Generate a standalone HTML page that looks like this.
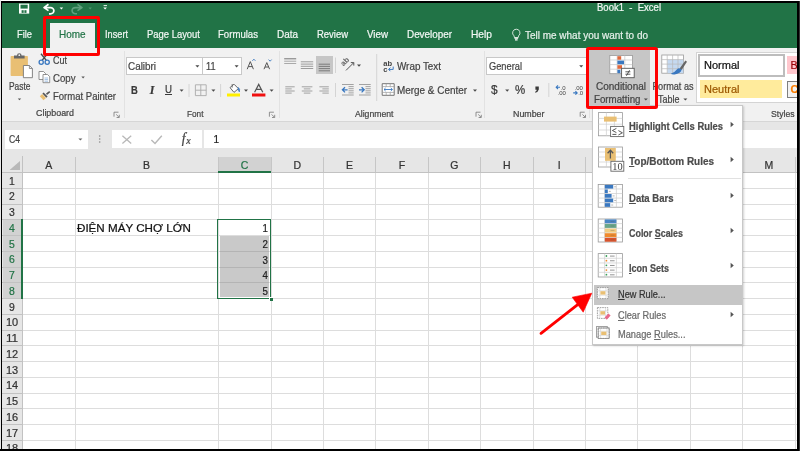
<!DOCTYPE html>
<html><head><meta charset="utf-8"><title>Book1 - Excel</title>
<style>
html,body{margin:0;padding:0}
body{width:800px;height:451px;position:relative;overflow:hidden;background:#fff;font-family:"Liberation Sans",sans-serif}
#a{will-change:transform}
#a div,#a span,#a svg{position:absolute}
.t{white-space:nowrap;line-height:1;-webkit-text-stroke:0.22px currentColor}
u{text-decoration:underline;text-underline-offset:1px;text-decoration-thickness:0.7px}
</style></head>
<body><div id="a">
<div style="left:0px;top:0px;width:800px;height:451px;background:#fff;"></div>
<div style="left:0px;top:0px;width:800px;height:47.5px;background:#217346;"></div>
<div style="left:0px;top:47.5px;width:800px;height:73.5px;background:#f1f1f1;"></div>
<div style="left:0px;top:121px;width:800px;height:1px;background:#d6d6d6;"></div>
<div style="left:0px;top:122px;width:800px;height:50.5px;background:#e6e6e6;"></div>
<div style="left:50.4px;top:23px;width:44.8px;height:25px;background:#f1f1f1;"></div>
<span class="t" style="top:2.03px;font-size:10.6px;color:#f2f7f4;left:597px;transform-origin:0 0;transform:scaleX(0.8982);">Book1 &nbsp;- &nbsp;Excel</span>
<span class="t" style="top:29.46px;font-size:10.8px;color:#f2f7f4;left:17px;transform-origin:0 0;transform:scaleX(0.8618);">File</span>
<span class="t" style="top:29.46px;font-size:10.8px;color:#f2f7f4;left:105px;transform-origin:0 0;transform:scaleX(0.8514);">Insert</span>
<span class="t" style="top:29.46px;font-size:10.8px;color:#f2f7f4;left:147px;transform-origin:0 0;transform:scaleX(0.8740);">Page Layout</span>
<span class="t" style="top:29.46px;font-size:10.8px;color:#f2f7f4;left:218px;transform-origin:0 0;transform:scaleX(0.8889);">Formulas</span>
<span class="t" style="top:29.46px;font-size:10.8px;color:#f2f7f4;left:277px;transform-origin:0 0;transform:scaleX(0.9205);">Data</span>
<span class="t" style="top:29.46px;font-size:10.8px;color:#f2f7f4;left:317px;transform-origin:0 0;transform:scaleX(0.8756);">Review</span>
<span class="t" style="top:29.46px;font-size:10.8px;color:#f2f7f4;left:367px;transform-origin:0 0;transform:scaleX(0.9044);">View</span>
<span class="t" style="top:29.46px;font-size:10.8px;color:#f2f7f4;left:407px;transform-origin:0 0;transform:scaleX(0.9143);">Developer</span>
<span class="t" style="top:29.46px;font-size:10.8px;color:#f2f7f4;left:471px;transform-origin:0 0;transform:scaleX(0.9451);">Help</span>
<span class="t" style="top:29.46px;font-size:10.8px;color:#217346;left:59.4px;transform-origin:0 0;transform:scaleX(0.9232);">Home</span>
<span class="t" style="top:29.56px;font-size:10.8px;color:#e6f0ea;left:525px;transform-origin:0 0;transform:scaleX(0.9232);">Tell me what you want to do</span>
<div style="left:123.5px;top:51px;width:1px;height:67px;background:#e2e2e2;"></div>
<div style="left:278.5px;top:51px;width:1px;height:67px;background:#e2e2e2;"></div>
<div style="left:483.5px;top:51px;width:1px;height:67px;background:#e2e2e2;"></div>
<div style="left:588.5px;top:51px;width:1px;height:67px;background:#e2e2e2;"></div>
<span class="t" style="top:80.71px;font-size:10.5px;color:#444;left:9px;transform-origin:0 0;transform:scaleX(0.8005);">Paste</span>
<span class="t" style="top:54.61px;font-size:10.5px;color:#444;left:53px;transform-origin:0 0;transform:scaleX(0.8566);">Cut</span>
<span class="t" style="top:72.61px;font-size:10.5px;color:#444;left:53px;transform-origin:0 0;transform:scaleX(0.9178);">Copy</span>
<span class="t" style="top:90.71px;font-size:10.5px;color:#444;left:53px;transform-origin:0 0;transform:scaleX(0.9071);">Format Painter</span>
<span class="t" style="top:109.43px;font-size:9.3px;color:#444;left:36.2px;transform-origin:0 0;transform:scaleX(0.9548);">Clipboard</span>
<span class="t" style="top:109.51px;font-size:9.2px;color:#444;left:187px;transform-origin:0 0;transform:scaleX(0.8972);">Font</span>
<span class="t" style="top:109.51px;font-size:9.2px;color:#444;left:355px;transform-origin:0 0;transform:scaleX(0.9423);">Alignment</span>
<span class="t" style="top:109.51px;font-size:9.2px;color:#444;left:513px;transform-origin:0 0;transform:scaleX(0.9637);">Number</span>
<span class="t" style="top:109.51px;font-size:9.2px;color:#444;left:771px;transform-origin:0 0;transform:scaleX(0.9388);">Styles</span>
<div style="left:126px;top:56.5px;width:76.5px;height:18px;background:#fff;box-sizing:border-box;border:1px solid #c8c8c8;"></div>
<div style="left:201.5px;top:56.5px;width:40px;height:18px;background:#fff;box-sizing:border-box;border:1px solid #c8c8c8;"></div>
<span class="t" style="top:60.71px;font-size:10.5px;color:#444;left:128.2px;transform-origin:0 0;transform:scaleX(0.9407);">Calibri</span>
<span class="t" style="top:60.71px;font-size:10.5px;color:#444;left:205.5px;transform-origin:0 0;transform:scaleX(0.8711);">11</span>
<span class="t" style="top:84.56px;font-size:10.8px;color:#3a3a3a;font-weight:bold;left:131px;transform-origin:0 0;transform:scaleX(0.8704);">B</span>
<span class="t" style="top:83.54px;font-size:12px;color:#3a3a3a;font-weight:bold;font-style:italic;left:149.8px;transform-origin:0 0;font-family:&quot;Liberation Serif&quot;,serif;">I</span>
<span class="t" style="top:84.60px;font-size:10.4px;color:#3a3a3a;left:165px;transform-origin:0 0;transform:scaleX(0.9314);text-decoration:underline;text-underline-offset:1px;">U</span>
<div style="left:316px;top:55.5px;width:17px;height:18px;background:#c6c6c6;"></div>
<span class="t" style="top:61.11px;font-size:10.5px;color:#444;left:397px;transform-origin:0 0;transform:scaleX(0.9384);">Wrap Text</span>
<span class="t" style="top:85.11px;font-size:10.5px;color:#444;left:397.2px;transform-origin:0 0;transform:scaleX(0.9444);">Merge &amp; Center</span>
<div style="left:486px;top:56.5px;width:101.5px;height:18px;background:#fff;box-sizing:border-box;border:1px solid #c8c8c8;"></div>
<span class="t" style="top:60.71px;font-size:10.5px;color:#444;left:488.5px;transform-origin:0 0;transform:scaleX(0.8833);">General</span>
<span class="t" style="top:83.20px;font-size:13px;color:#3a3a3a;left:491px;transform-origin:0 0;transform:scaleX(0.9123);">$</span>
<span class="t" style="top:83.70px;font-size:12.4px;color:#3a3a3a;left:515px;transform-origin:0 0;transform:scaleX(0.9246);">%</span>
<div style="left:589px;top:49px;width:61px;height:57px;background:#c6c6c6;"></div>
<span class="t" style="top:80.71px;font-size:10.5px;color:#444;left:621px;transform-origin:50% 0;transform:translateX(-50%) scaleX(0.9515);">Conditional</span>
<span class="t" style="top:93.71px;font-size:10.5px;color:#444;left:594.3px;transform-origin:0 0;transform:scaleX(0.9265);">Formatting</span>
<span class="t" style="top:80.71px;font-size:10.5px;color:#444;left:673px;transform-origin:50% 0;transform:translateX(-50%) scaleX(0.8674);">Format as</span>
<span class="t" style="top:93.71px;font-size:10.5px;color:#444;left:658px;transform-origin:0 0;transform:scaleX(0.8563);">Table</span>
<div style="left:696.3px;top:51.6px;width:104px;height:51px;background:#fff;box-sizing:border-box;border:1px solid #d4d4d4;"></div>
<div style="left:697.5px;top:54.2px;width:87px;height:22.6px;background:#fff;box-sizing:border-box;border:2px solid #bdbdbd;"></div>
<span class="t" style="top:60.16px;font-size:10.8px;color:#111;left:703.5px;transform-origin:0 0;transform:scaleX(1.0202);">Normal</span>
<div style="left:787px;top:56.4px;width:14px;height:18px;background:#ffc7ce;"></div>
<span class="t" style="top:60.16px;font-size:10.8px;color:#9c0006;left:790.6px;transform-origin:0 0;">B</span>
<div style="left:699.8px;top:80px;width:82px;height:18.2px;background:#ffeb9c;"></div>
<span class="t" style="top:84.06px;font-size:10.8px;color:#9c5700;left:703.5px;transform-origin:0 0;transform:scaleX(1.0197);">Neutral</span>
<div style="left:787px;top:80.6px;width:14px;height:17.6px;background:#f2f2f2;box-sizing:border-box;border:1px solid #7f7f7f;"></div>
<span class="t" style="top:84.06px;font-size:10.8px;color:#fa7d00;font-weight:bold;left:790.4px;transform-origin:0 0;">C</span>
<div style="left:5px;top:130px;width:82.5px;height:18.5px;background:#fff;"></div>
<span class="t" style="top:134.84px;font-size:10px;color:#444;left:9px;transform-origin:0 0;transform:scaleX(0.8596);">C4</span>
<div style="left:112px;top:129.8px;width:89.5px;height:18.6px;background:#fff;"></div>
<div style="left:203.6px;top:129.8px;width:597px;height:18.6px;background:#fff;"></div>
<span class="t" style="top:134.84px;font-size:10px;color:#222;left:213.5px;transform-origin:0 0;">1</span>
<span class="t" style="top:131.89px;font-size:13.6px;color:#444;font-style:italic;left:181.8px;transform-origin:0 0;font-family:&quot;Liberation Serif&quot;,serif;">f</span>
<span class="t" style="top:135.73px;font-size:10px;color:#444;font-style:italic;left:186.2px;transform-origin:0 0;font-family:&quot;Liberation Serif&quot;,serif;">x</span>
<div style="left:22.5px;top:172.5px;width:778px;height:280px;background:#fff;"></div>
<div style="left:0px;top:172.5px;width:22.5px;height:280px;background:#e6e6e6;"></div>
<div style="left:218px;top:157px;width:53px;height:15.5px;background:#d2d2d2;"></div>
<div style="left:3px;top:219px;width:19.5px;height:80px;background:#d2d2d2;"></div>
<div style="left:74.7px;top:157px;width:1px;height:15.5px;background:#c6c6c6;"></div>
<div style="left:74.7px;top:172.5px;width:1px;height:280px;background:#dddddd;"></div>
<span class="t" style="top:159.71px;font-size:10.5px;color:#333;left:48.85px;transform-origin:50% 0;transform:translateX(-50%) scaleX(1.0000);">A</span>
<div style="left:217.5px;top:157px;width:1px;height:15.5px;background:#c6c6c6;"></div>
<div style="left:217.5px;top:172.5px;width:1px;height:280px;background:#dddddd;"></div>
<span class="t" style="top:159.71px;font-size:10.5px;color:#333;left:146.6px;transform-origin:50% 0;transform:translateX(-50%) scaleX(1.0000);">B</span>
<div style="left:270.5px;top:157px;width:1px;height:15.5px;background:#c6c6c6;"></div>
<div style="left:270.5px;top:172.5px;width:1px;height:280px;background:#dddddd;"></div>
<span class="t" style="top:159.71px;font-size:10.5px;color:#217346;left:244.5px;transform-origin:50% 0;transform:translateX(-50%) scaleX(1.0000);">C</span>
<div style="left:322.9px;top:157px;width:1px;height:15.5px;background:#c6c6c6;"></div>
<div style="left:322.9px;top:172.5px;width:1px;height:280px;background:#dddddd;"></div>
<span class="t" style="top:159.71px;font-size:10.5px;color:#333;left:297.2px;transform-origin:50% 0;transform:translateX(-50%) scaleX(1.0000);">D</span>
<div style="left:375.3px;top:157px;width:1px;height:15.5px;background:#c6c6c6;"></div>
<div style="left:375.3px;top:172.5px;width:1px;height:280px;background:#dddddd;"></div>
<span class="t" style="top:159.71px;font-size:10.5px;color:#333;left:349.6px;transform-origin:50% 0;transform:translateX(-50%) scaleX(1.0000);">E</span>
<div style="left:427.7px;top:157px;width:1px;height:15.5px;background:#c6c6c6;"></div>
<div style="left:427.7px;top:172.5px;width:1px;height:280px;background:#dddddd;"></div>
<span class="t" style="top:159.71px;font-size:10.5px;color:#333;left:402.0px;transform-origin:50% 0;transform:translateX(-50%) scaleX(1.0000);">F</span>
<div style="left:480.1px;top:157px;width:1px;height:15.5px;background:#c6c6c6;"></div>
<div style="left:480.1px;top:172.5px;width:1px;height:280px;background:#dddddd;"></div>
<span class="t" style="top:159.71px;font-size:10.5px;color:#333;left:454.4px;transform-origin:50% 0;transform:translateX(-50%) scaleX(1.0000);">G</span>
<div style="left:532.5px;top:157px;width:1px;height:15.5px;background:#c6c6c6;"></div>
<div style="left:532.5px;top:172.5px;width:1px;height:280px;background:#dddddd;"></div>
<span class="t" style="top:159.71px;font-size:10.5px;color:#333;left:506.8px;transform-origin:50% 0;transform:translateX(-50%) scaleX(1.0000);">H</span>
<div style="left:584.9px;top:157px;width:1px;height:15.5px;background:#c6c6c6;"></div>
<div style="left:584.9px;top:172.5px;width:1px;height:280px;background:#dddddd;"></div>
<span class="t" style="top:159.71px;font-size:10.5px;color:#333;left:559.2px;transform-origin:50% 0;transform:translateX(-50%) scaleX(1.0000);">I</span>
<div style="left:637.3px;top:157px;width:1px;height:15.5px;background:#c6c6c6;"></div>
<div style="left:637.3px;top:172.5px;width:1px;height:280px;background:#dddddd;"></div>
<span class="t" style="top:159.71px;font-size:10.5px;color:#333;left:611.5999999999999px;transform-origin:50% 0;transform:translateX(-50%) scaleX(1.0000);">J</span>
<div style="left:689.7px;top:157px;width:1px;height:15.5px;background:#c6c6c6;"></div>
<div style="left:689.7px;top:172.5px;width:1px;height:280px;background:#dddddd;"></div>
<span class="t" style="top:159.71px;font-size:10.5px;color:#333;left:664.0px;transform-origin:50% 0;transform:translateX(-50%) scaleX(1.0000);">K</span>
<div style="left:742.1px;top:157px;width:1px;height:15.5px;background:#c6c6c6;"></div>
<div style="left:742.1px;top:172.5px;width:1px;height:280px;background:#dddddd;"></div>
<span class="t" style="top:159.71px;font-size:10.5px;color:#333;left:716.4000000000001px;transform-origin:50% 0;transform:translateX(-50%) scaleX(1.0000);">L</span>
<div style="left:794.5px;top:157px;width:1px;height:15.5px;background:#c6c6c6;"></div>
<div style="left:794.5px;top:172.5px;width:1px;height:280px;background:#dddddd;"></div>
<span class="t" style="top:159.71px;font-size:10.5px;color:#333;left:768.8px;transform-origin:50% 0;transform:translateX(-50%) scaleX(1.0000);">M</span>
<div style="left:22px;top:156px;width:1px;height:295px;background:#c2c2c2;"></div>
<div style="left:0px;top:172px;width:800px;height:1px;background:#c2c2c2;"></div>
<div style="left:218px;top:171px;width:53px;height:1.6px;background:#217346;"></div>
<div style="left:0px;top:187.75px;width:22.5px;height:1px;background:#c2c2c2;"></div>
<div style="left:22.5px;top:187.75px;width:778px;height:1px;background:#dddddd;"></div>
<span class="t" style="top:175.71px;font-size:10.8px;color:#333;left:11.9px;transform-origin:50% 0;transform:translateX(-50%) scaleX(0.9642);">1</span>
<div style="left:0px;top:203.5px;width:22.5px;height:1px;background:#c2c2c2;"></div>
<div style="left:22.5px;top:203.5px;width:778px;height:1px;background:#dddddd;"></div>
<span class="t" style="top:191.46px;font-size:10.8px;color:#333;left:11.9px;transform-origin:50% 0;transform:translateX(-50%) scaleX(0.9642);">2</span>
<div style="left:0px;top:219.25px;width:22.5px;height:1px;background:#c2c2c2;"></div>
<div style="left:22.5px;top:219.25px;width:778px;height:1px;background:#dddddd;"></div>
<span class="t" style="top:207.21px;font-size:10.8px;color:#333;left:11.9px;transform-origin:50% 0;transform:translateX(-50%) scaleX(0.9642);">3</span>
<div style="left:0px;top:235.0px;width:22.5px;height:1px;background:#c2c2c2;"></div>
<div style="left:22.5px;top:235.0px;width:778px;height:1px;background:#dddddd;"></div>
<span class="t" style="top:222.96px;font-size:10.8px;color:#217346;left:11.9px;transform-origin:50% 0;transform:translateX(-50%) scaleX(0.9642);">4</span>
<div style="left:0px;top:250.75px;width:22.5px;height:1px;background:#c2c2c2;"></div>
<div style="left:22.5px;top:250.75px;width:778px;height:1px;background:#dddddd;"></div>
<span class="t" style="top:238.71px;font-size:10.8px;color:#217346;left:11.9px;transform-origin:50% 0;transform:translateX(-50%) scaleX(0.9642);">5</span>
<div style="left:0px;top:266.5px;width:22.5px;height:1px;background:#c2c2c2;"></div>
<div style="left:22.5px;top:266.5px;width:778px;height:1px;background:#dddddd;"></div>
<span class="t" style="top:254.46px;font-size:10.8px;color:#217346;left:11.9px;transform-origin:50% 0;transform:translateX(-50%) scaleX(0.9642);">6</span>
<div style="left:0px;top:282.25px;width:22.5px;height:1px;background:#c2c2c2;"></div>
<div style="left:22.5px;top:282.25px;width:778px;height:1px;background:#dddddd;"></div>
<span class="t" style="top:270.21px;font-size:10.8px;color:#217346;left:11.9px;transform-origin:50% 0;transform:translateX(-50%) scaleX(0.9642);">7</span>
<div style="left:0px;top:298.0px;width:22.5px;height:1px;background:#c2c2c2;"></div>
<div style="left:22.5px;top:298.0px;width:778px;height:1px;background:#dddddd;"></div>
<span class="t" style="top:285.96px;font-size:10.8px;color:#217346;left:11.9px;transform-origin:50% 0;transform:translateX(-50%) scaleX(0.9642);">8</span>
<div style="left:0px;top:313.75px;width:22.5px;height:1px;background:#c2c2c2;"></div>
<div style="left:22.5px;top:313.75px;width:778px;height:1px;background:#dddddd;"></div>
<span class="t" style="top:301.71px;font-size:10.8px;color:#333;left:11.9px;transform-origin:50% 0;transform:translateX(-50%) scaleX(0.9642);">9</span>
<div style="left:0px;top:329.5px;width:22.5px;height:1px;background:#c2c2c2;"></div>
<div style="left:22.5px;top:329.5px;width:778px;height:1px;background:#dddddd;"></div>
<span class="t" style="top:317.46px;font-size:10.8px;color:#333;left:11.9px;transform-origin:50% 0;transform:translateX(-50%) scaleX(1.0153);">10</span>
<div style="left:0px;top:345.25px;width:22.5px;height:1px;background:#c2c2c2;"></div>
<div style="left:22.5px;top:345.25px;width:778px;height:1px;background:#dddddd;"></div>
<span class="t" style="top:333.21px;font-size:10.8px;color:#333;left:11.9px;transform-origin:50% 0;transform:translateX(-50%) scaleX(1.0875);">11</span>
<div style="left:0px;top:361.0px;width:22.5px;height:1px;background:#c2c2c2;"></div>
<div style="left:22.5px;top:361.0px;width:778px;height:1px;background:#dddddd;"></div>
<span class="t" style="top:348.96px;font-size:10.8px;color:#333;left:11.9px;transform-origin:50% 0;transform:translateX(-50%) scaleX(1.0153);">12</span>
<div style="left:0px;top:376.75px;width:22.5px;height:1px;background:#c2c2c2;"></div>
<div style="left:22.5px;top:376.75px;width:778px;height:1px;background:#dddddd;"></div>
<span class="t" style="top:364.71px;font-size:10.8px;color:#333;left:11.9px;transform-origin:50% 0;transform:translateX(-50%) scaleX(1.0153);">13</span>
<div style="left:0px;top:392.5px;width:22.5px;height:1px;background:#c2c2c2;"></div>
<div style="left:22.5px;top:392.5px;width:778px;height:1px;background:#dddddd;"></div>
<span class="t" style="top:380.46px;font-size:10.8px;color:#333;left:11.9px;transform-origin:50% 0;transform:translateX(-50%) scaleX(1.0153);">14</span>
<div style="left:0px;top:408.25px;width:22.5px;height:1px;background:#c2c2c2;"></div>
<div style="left:22.5px;top:408.25px;width:778px;height:1px;background:#dddddd;"></div>
<span class="t" style="top:396.21px;font-size:10.8px;color:#333;left:11.9px;transform-origin:50% 0;transform:translateX(-50%) scaleX(1.0153);">15</span>
<div style="left:0px;top:424.0px;width:22.5px;height:1px;background:#c2c2c2;"></div>
<div style="left:22.5px;top:424.0px;width:778px;height:1px;background:#dddddd;"></div>
<span class="t" style="top:411.96px;font-size:10.8px;color:#333;left:11.9px;transform-origin:50% 0;transform:translateX(-50%) scaleX(1.0153);">16</span>
<div style="left:0px;top:439.75px;width:22.5px;height:1px;background:#c2c2c2;"></div>
<div style="left:22.5px;top:439.75px;width:778px;height:1px;background:#dddddd;"></div>
<span class="t" style="top:427.71px;font-size:10.8px;color:#333;left:11.9px;transform-origin:50% 0;transform:translateX(-50%) scaleX(1.0153);">17</span>
<div style="left:0px;top:455.5px;width:22.5px;height:1px;background:#c2c2c2;"></div>
<div style="left:22.5px;top:455.5px;width:778px;height:1px;background:#dddddd;"></div>
<span class="t" style="top:443.46px;font-size:10.8px;color:#333;left:11.9px;transform-origin:50% 0;transform:translateX(-50%) scaleX(1.0153);">18</span>
<div style="left:21.3px;top:219px;width:1.4px;height:80px;background:#217346;"></div>
<svg style="left:8px;top:159px" width="12" height="12"><path d="M12.6,1.4 L12.6,11 L1.6,11 Z" fill="#b8b8b8"/></svg>
<div style="left:219.6px;top:235.8px;width:49.8px;height:61.2px;background:#c9c9c9;"></div>
<div style="left:219.6px;top:250.75px;width:49.8px;height:1px;background:#b4b4b4;"></div>
<div style="left:219.6px;top:266.5px;width:49.8px;height:1px;background:#b4b4b4;"></div>
<div style="left:219.6px;top:282.25px;width:49.8px;height:1px;background:#b4b4b4;"></div>
<div style="left:217.4px;top:218.9px;width:53.8px;height:79.8px;box-sizing:border-box;border:1.4px solid #217346"></div>
<div style="left:269.3px;top:296.8px;width:4px;height:4px;background:#fff;"></div>
<div style="left:270px;top:297.5px;width:3px;height:3px;background:#217346;"></div>
<span class="t" style="top:224.00px;font-size:10.4px;color:#222;right:532.1px;transform-origin:100% 0;transform:scaleX(0.9341);">1</span>
<span class="t" style="top:239.75px;font-size:10.4px;color:#222;right:532.1px;transform-origin:100% 0;transform:scaleX(0.9341);">2</span>
<span class="t" style="top:255.50px;font-size:10.4px;color:#222;right:532.1px;transform-origin:100% 0;transform:scaleX(0.9341);">3</span>
<span class="t" style="top:271.25px;font-size:10.4px;color:#222;right:532.1px;transform-origin:100% 0;transform:scaleX(0.9341);">4</span>
<span class="t" style="top:287.00px;font-size:10.4px;color:#222;right:532.1px;transform-origin:100% 0;transform:scaleX(0.9341);">5</span>
<span class="t" style="top:222.53px;font-size:11.3px;color:#111;left:77px;transform-origin:0 0;transform:scaleX(1.0288);">ĐIỆN MÁY CHỢ LỚN</span>
<div style="left:591.8px;top:105.4px;width:151px;height:239.4px;background:#fff;box-sizing:border-box;border:1px solid #c8c8c8;box-shadow:1px 1px 2px rgba(0,0,0,0.18);"></div>
<div style="left:594px;top:285px;width:147.5px;height:19.5px;background:#c6c6c6;"></div>
<div style="left:628px;top:177.5px;width:113px;height:1px;background:#e1e1e1;"></div>
<span class="t" style="top:121.33px;font-size:10.6px;color:#4c4c4c;font-weight:bold;left:629.3px;transform-origin:0 0;transform:scaleX(0.8871);"><u>H</u>ighlight Cells Rules</span>
<span class="t" style="top:156.33px;font-size:10.6px;color:#4c4c4c;font-weight:bold;left:629.3px;transform-origin:0 0;transform:scaleX(0.9399);"><u>T</u>op/Bottom Rules</span>
<span class="t" style="top:192.83px;font-size:10.6px;color:#4c4c4c;font-weight:bold;left:629.3px;transform-origin:0 0;transform:scaleX(0.8996);"><u>D</u>ata Bars</span>
<span class="t" style="top:227.83px;font-size:10.6px;color:#4c4c4c;font-weight:bold;left:629.3px;transform-origin:0 0;transform:scaleX(0.8411);">Color <u>S</u>cales</span>
<span class="t" style="top:262.83px;font-size:10.6px;color:#4c4c4c;font-weight:bold;left:629.3px;transform-origin:0 0;transform:scaleX(0.8491);"><u>I</u>con Sets</span>
<svg style="left:730px;top:120.8px" width="5" height="7"><path d="M0.6,0.7 L3.8,3.5 L0.6,6.3 Z" fill="#555"/></svg>
<svg style="left:730px;top:155.8px" width="5" height="7"><path d="M0.6,0.7 L3.8,3.5 L0.6,6.3 Z" fill="#555"/></svg>
<svg style="left:730px;top:192.4px" width="5" height="7"><path d="M0.6,0.7 L3.8,3.5 L0.6,6.3 Z" fill="#555"/></svg>
<svg style="left:730px;top:227.4px" width="5" height="7"><path d="M0.6,0.7 L3.8,3.5 L0.6,6.3 Z" fill="#555"/></svg>
<svg style="left:730px;top:262.4px" width="5" height="7"><path d="M0.6,0.7 L3.8,3.5 L0.6,6.3 Z" fill="#555"/></svg>
<svg style="left:730px;top:310.6px" width="5" height="7"><path d="M0.6,0.7 L3.8,3.5 L0.6,6.3 Z" fill="#555"/></svg>
<span class="t" style="top:290.00px;font-size:10.4px;color:#333;left:618px;transform-origin:0 0;transform:scaleX(0.8842);"><u>N</u>ew Rule...</span>
<span class="t" style="top:310.60px;font-size:10.4px;color:#6a6a6a;left:618px;transform-origin:0 0;transform:scaleX(0.8840);"><u>C</u>lear Rules</span>
<span class="t" style="top:329.70px;font-size:10.4px;color:#6a6a6a;left:618px;transform-origin:0 0;transform:scaleX(0.8918);">Manage <u>R</u>ules...</span>
<svg style="left:0;top:0" width="800" height="451" viewBox="0 0 800 451"><rect x="19" y="3.6" width="10.2" height="10" fill="#fff"/><rect x="20.5" y="4.7" width="7.2" height="3.9" fill="#217346"/><rect x="21.6" y="10.2" width="2.1" height="2.7" fill="#217346"/><rect x="24.4" y="10.2" width="2.1" height="2.7" fill="#217346"/><path d="M48.5,4.3 L44,7.6 L48.5,10.6 M44.3,7.6 H50.5 a3.4,3.1 0 0 1 0,6.2 H49" fill="none" stroke="#fff" stroke-width="1.7" stroke-linejoin="round"/><path d="M59.599999999999994,7.6 h3.6 l-1.8,2 Z" fill="#fff"/><path d="M77.5,4.3 L82,7.6 L77.5,10.6 M81.7,7.6 H75.5 a3.4,3.1 0 0 0 0,6.2 H77" fill="none" stroke="#5f9f7d" stroke-width="1.6" stroke-linejoin="round"/><path d="M88.5,7.6 h3.4 l-1.7,2 Z" fill="#4f9470"/><path d="M103.6,5.6 h3.4" stroke="#fff" stroke-width="0.9"/><path d="M103.3,7.6 h3.6 l-1.8,2 Z" fill="#fff"/><path d="M516.3,29.2 a3.7,3.7 0 0 1 2.3,6.6 l-0.5,1.9 h-3.6 l-0.5,-1.9 a3.7,3.7 0 0 1 2.3,-6.6 Z" fill="none" stroke="#e4efe8" stroke-width="0.9"/><path d="M514.5,38.2 h3.6 M515,39.8 h2.6" stroke="#fff" stroke-width="1.2"/><rect x="10.6" y="56" width="17.3" height="20" rx="0.8" fill="#e9bf73"/><path d="M14,58.6 v-3 h3 a2.3,2.4 0 0 1 4.6,0 h3 v3 Z" fill="#666"/><circle cx="19.3" cy="55.2" r="0.9" fill="#f1f1f1"/><path d="M23.4,65.5 h6 l3,3 v9.2 h-9 Z" fill="#fff" stroke="#777" stroke-width="0.9"/><path d="M29.4,65.5 v3 h3" fill="none" stroke="#777" stroke-width="0.8"/><path d="M17.8,98.4 h3.4 l-1.7,1.9 Z" fill="#555"/><path d="M41,53.8 L46.3,60.4 M47.4,53.8 L42.1,60.4" stroke="#4a4a4a" stroke-width="1.4"/><circle cx="41.2" cy="62.2" r="2.1" fill="none" stroke="#3a78c0" stroke-width="1.3"/><circle cx="47.2" cy="62.2" r="2.1" fill="none" stroke="#3a78c0" stroke-width="1.3"/><path d="M39,71.5 h4.5 l2,2 v6 h-6.5 Z" fill="#fff" stroke="#777" stroke-width="0.8"/><path d="M43,74.5 h4.5 l2.2,2.2 v6 h-6.7 Z" fill="#fff" stroke="#777" stroke-width="0.8"/><path d="M44.5,78 h3.6 M44.5,79.6 h3.6 M44.5,81.2 h3.6" stroke="#7aa5d6" stroke-width="0.7"/><path d="M81.39999999999999,76.6 h3.4 l-1.7,1.9 Z" fill="#555"/><path d="M46,93.5 L49.3,91 L50.2,92.2 L47,95 Z" fill="#555"/><path d="M43.6,92.5 L47.6,96.6 L46.3,97.7 L42.4,93.6 Z" fill="#555"/><path d="M42.2,94 L46,98 L43.5,100.2 L39.8,96.3 Z" fill="#e9bf73"/><path d="M118.5,112.2 H114 V116.7" fill="none" stroke="#777" stroke-width="0.8"/><path d="M116.2,114.4 L119,117.2 M119.3,114.8 V117.5 H116.6" fill="none" stroke="#777" stroke-width="0.8"/><path d="M273.9,112.2 H269.4 V116.7" fill="none" stroke="#777" stroke-width="0.8"/><path d="M271.59999999999997,114.4 L274.4,117.2 M274.7,114.8 V117.5 H272.0" fill="none" stroke="#777" stroke-width="0.8"/><path d="M480.5,112.2 H476 V116.7" fill="none" stroke="#777" stroke-width="0.8"/><path d="M478.2,114.4 L481,117.2 M481.3,114.8 V117.5 H478.6" fill="none" stroke="#777" stroke-width="0.8"/><path d="M584.7,112.2 H580.2 V116.7" fill="none" stroke="#777" stroke-width="0.8"/><path d="M582.4000000000001,114.4 L585.2,117.2 M585.5,114.8 V117.5 H582.8000000000001" fill="none" stroke="#777" stroke-width="0.8"/><path d="M195.4,65.2 h4 l-2.0,2.2 Z" fill="#4a4a4a"/><path d="M234.60000000000002,65.2 h4 l-2.0,2.2 Z" fill="#4a4a4a"/><path d="M247.2,69.2 L250.3,61.6 L253.4,69.2 M248.3,66.6 H252.3" fill="none" stroke="#555" stroke-width="1"/><path d="M252.4,60.8 l1.5,-1.6 l1.5,1.6" fill="none" stroke="#3a78c0" stroke-width="0.9"/><path d="M264,69.2 L266.8,62.6 L269.6,69.2 M265,67 H268.6" fill="none" stroke="#555" stroke-width="1"/><path d="M268.6,59.6 l1.5,1.6 l1.5,-1.6" fill="none" stroke="#3a78c0" stroke-width="0.9"/><path d="M179.60000000000002,89.6 h4 l-2.0,2.2 Z" fill="#4a4a4a"/><path d="M189,84 V97 M220.6,84 V97" stroke="#d4d4d4" stroke-width="1"/><path d="M195.4,84.8 h10.8 v10.8 h-10.8 Z M200.8,84.8 v10.8 M195.4,90.2 h10.8" fill="none" stroke="#aaa" stroke-width="0.9"/><path d="M211.4,89.6 h4 l-2.0,2.2 Z" fill="#4a4a4a"/><path d="M230,87.6 L234,84.2 L238.4,88.6 L234,92.4 Z" fill="#fff" stroke="#666" stroke-width="1"/><path d="M232.2,84 v3.6" stroke="#666" stroke-width="0.9"/><path d="M238.2,87.4 q2.2,1.4 1.2,4.6 q-1.8,-1.4 -1.2,-4.6" fill="#3a78c0" stroke="#3a78c0" stroke-width="0.6"/><rect x="227" y="93.5" width="13" height="3" fill="#ffef00"/><path d="M244.0,89.6 h4 l-2.0,2.2 Z" fill="#4a4a4a"/><path d="M254.6,92.3 L258.7,84.4 L262.8,92.3 M256.2,89.4 H261.2" fill="none" stroke="#555" stroke-width="1.2"/><rect x="252" y="93.5" width="13.4" height="3" fill="#f01010"/><path d="M269.6,89.6 h4 l-2.0,2.2 Z" fill="#4a4a4a"/><path d="M284.2,58.8 H296.2" stroke="#555" stroke-width="0.8"/><path d="M284.2,61.2 H296.2" stroke="#8a8a8a" stroke-width="0.7"/><path d="M284.2,63.5 H296.2" stroke="#8a8a8a" stroke-width="0.7"/><path d="M300.8,61.8 H313.2" stroke="#777" stroke-width="0.7"/><path d="M300.8,64.1 H313.2" stroke="#777" stroke-width="0.7"/><path d="M300.8,66.3 H313.2" stroke="#777" stroke-width="0.7"/><path d="M300.8,68.5 H313.2" stroke="#777" stroke-width="0.7"/><path d="M318.7,64.2 H330" stroke="#5a5a5a" stroke-width="0.7"/><path d="M318.7,66.4 H330" stroke="#5a5a5a" stroke-width="0.7"/><path d="M318.7,68.6 H330" stroke="#5a5a5a" stroke-width="0.7"/><path d="M318.7,70.8 H330" stroke="#5a5a5a" stroke-width="0.7"/><path d="M335.5,57.5 V73 M335.5,83 V97 M376.7,54 V101 M548.8,83 V97" stroke="#d4d4d4" stroke-width="1"/><text x="0" y="0" transform="translate(343.6,66.4) rotate(-45)" font-size="7.6" font-weight="bold" fill="#666" font-family="Liberation Sans, sans-serif">ab</text><path d="M346,70.4 L353.6,62.8 M350.8,62.6 H353.8 V65.6" fill="none" stroke="#555" stroke-width="1"/><path d="M357.0,64.6 h4 l-2.0,2.2 Z" fill="#4a4a4a"/><path d="M285.3,86.8 h9.4" stroke="#999" stroke-width="0.9"/><path d="M301.8,86.8 h10.6" stroke="#999" stroke-width="0.9"/><path d="M319.40000000000003,86.8 h9.4" stroke="#999" stroke-width="0.9"/><path d="M285.3,88.9 h6.4" stroke="#999" stroke-width="0.9"/><path d="M303.8,88.9 h6.6" stroke="#999" stroke-width="0.9"/><path d="M322.40000000000003,88.9 h6.4" stroke="#999" stroke-width="0.9"/><path d="M285.3,91 h9.4" stroke="#999" stroke-width="0.9"/><path d="M301.8,91 h10.6" stroke="#999" stroke-width="0.9"/><path d="M319.40000000000003,91 h9.4" stroke="#999" stroke-width="0.9"/><path d="M285.3,93.1 h6.4" stroke="#999" stroke-width="0.9"/><path d="M303.8,93.1 h6.6" stroke="#999" stroke-width="0.9"/><path d="M322.40000000000003,93.1 h6.4" stroke="#999" stroke-width="0.9"/><path d="M342,84.5 H353.7" stroke="#999" stroke-width="0.9"/><path d="M342,95 H353.7" stroke="#999" stroke-width="0.9"/><path d="M348.5,86.6 H353.7" stroke="#999" stroke-width="0.9"/><path d="M348.5,88.7 H353.7" stroke="#999" stroke-width="0.9"/><path d="M348.5,90.8 H353.7" stroke="#999" stroke-width="0.9"/><path d="M348.5,92.9 H353.7" stroke="#999" stroke-width="0.9"/><path d="M347.6,89.8 H342.6 M345,87.2 L342.4,89.8 L345,92.4" fill="none" stroke="#3a78c0" stroke-width="1.3"/><path d="M359,84.5 H370.7" stroke="#999" stroke-width="0.9"/><path d="M359,95 H370.7" stroke="#999" stroke-width="0.9"/><path d="M365.5,86.6 H370.7" stroke="#999" stroke-width="0.9"/><path d="M365.5,88.7 H370.7" stroke="#999" stroke-width="0.9"/><path d="M365.5,90.8 H370.7" stroke="#999" stroke-width="0.9"/><path d="M365.5,92.9 H370.7" stroke="#999" stroke-width="0.9"/><path d="M359,89.8 H364 M361.6,87.2 L364.2,89.8 L361.6,92.4" fill="none" stroke="#3a78c0" stroke-width="1.3"/><text x="383.2" y="66.2" font-size="7.6" font-weight="bold" fill="#444" font-family="Liberation Sans, sans-serif">ab</text><text x="383.2" y="71.6" font-size="7.6" font-weight="bold" fill="#444" font-family="Liberation Sans, sans-serif">c</text><path d="M393.2,66.6 v2.8 h-4.4 M390.4,67.6 l-1.8,1.8 l1.8,1.8" fill="none" stroke="#3a78c0" stroke-width="1"/><path d="M382.2,83.7 h12 v11.6 h-12 Z" fill="#fff" stroke="#666" stroke-width="0.9"/><path d="M382.2,86.6 h12 M382.2,92.4 h12 M386.2,83.7 v2.9 M390.2,83.7 v2.9 M386.2,92.4 v2.9 M390.2,92.4 v2.9" stroke="#999" stroke-width="0.7" fill="none"/><path d="M384,89.5 h8.4 M385.6,88 l-1.6,1.5 l1.6,1.5 M390.8,88 l1.6,1.5 l-1.6,1.5" fill="none" stroke="#3a78c0" stroke-width="0.9"/><path d="M473.0,89.6 h4 l-2.0,2.2 Z" fill="#4a4a4a"/><path d="M535.4,86.6 h3.4 v3 q-0.6,2.6 -3.6,3.2 v-1 q1.4,-0.6 1.6,-2 h-1.4 Z" fill="#3a3a3a"/><path d="M579.1999999999999,65.2 h4 l-2.0,2.2 Z" fill="#4a4a4a"/><path d="M505.2,89.6 h4 l-2.0,2.2 Z" fill="#4a4a4a"/><text x="560.6" y="89.8" font-size="6" fill="#444" font-family="Liberation Sans, sans-serif">.0</text><text x="557.6" y="95.4" font-size="6" fill="#444" font-family="Liberation Sans, sans-serif">.00</text><path d="M560,87.2 h-3.8 M558,85.4 l-1.8,1.8 l1.8,1.8" fill="none" stroke="#3a78c0" stroke-width="1.1"/><text x="574.6" y="89.8" font-size="6" fill="#444" font-family="Liberation Sans, sans-serif">.00</text><text x="578.2" y="95.4" font-size="6" fill="#444" font-family="Liberation Sans, sans-serif">.0</text><path d="M573.2,92.9 h4 M575.4,91.1 l1.8,1.8 l-1.8,1.8" fill="none" stroke="#3a78c0" stroke-width="1.1"/><rect x="609.8" y="55.5" width="22.6" height="18.2" fill="#fff" stroke="#999" stroke-width="0.8"/><path d="M617.2,55.5 v18.2 M624.8,55.5 v18.2 M609.8,60 h22.6 M609.8,64.6 h22.6 M609.8,69.2 h22.6" stroke="#c4c4c4" stroke-width="0.7"/><rect x="617.4" y="56.2" width="3.8" height="3.5" fill="#e0683c"/><rect x="617.4" y="60.6" width="6.6" height="3.6" fill="#3a78c0"/><rect x="617.4" y="65.2" width="4.6" height="3.6" fill="#e0683c"/><rect x="617.4" y="69.8" width="3" height="3.4" fill="#3a78c0"/><rect x="621.6" y="68.3" width="12.6" height="9.4" fill="#fff" stroke="#555" stroke-width="0.9"/><path d="M625.4,71.8 h5 M625.4,74.2 h5 M629.6,70.2 l-3.2,5.6" stroke="#333" stroke-width="0.8"/><path d="M643.8,98.4 h4 l-2.0,2.2 Z" fill="#4a4a4a"/><rect x="661.8" y="55" width="21.6" height="18.2" fill="#fff" stroke="#999" stroke-width="0.8"/><rect x="667.3" y="59.6" width="16" height="13.5" fill="#c5d9f0"/><path d="M667.2,55 v18.2 M672.6,55 v18.2 M678,55 v18.2 M661.8,59.6 h21.6 M661.8,64.1 h21.6 M661.8,68.7 h21.6" stroke="#b8b8b8" stroke-width="0.7"/><path d="M679.6,68.6 L685.4,60.6 L687,61.8 L681.6,70 Z" fill="#666"/><path d="M676.8,69.4 q2.6,-2.4 4.8,0.4 q-0.8,3.6 -7,4.6 q-3.4,0.2 -3.6,-1 q3.4,-0.6 5.8,-4" fill="#3a78c0"/><path d="M683.4,98.4 h4 l-2.0,2.2 Z" fill="#4a4a4a"/><path d="M78.39999999999999,138.4 h4 l-2.0,2.2 Z" fill="#666"/><circle cx="99.7" cy="136" r="0.8" fill="#8a8a8a"/><circle cx="99.7" cy="139" r="0.8" fill="#8a8a8a"/><circle cx="99.7" cy="142" r="0.8" fill="#8a8a8a"/><path d="M122.4,135.8 L131.2,143.6 M131.2,135.8 L122.4,143.6" stroke="#b8b8b8" stroke-width="1.3" fill="none"/><path d="M151.4,140 L155,143.4 L161.8,135.8" stroke="#b8b8b8" stroke-width="1.4" fill="none"/><rect x="598.4" y="112.6" width="24" height="23.2" fill="#fff" stroke="#9a9a9a" stroke-width="0.8"/><path d="M606.40,112.6 v23.2 M614.40,112.6 v23.2 M598.4,118.40 h24 M598.4,124.20 h24 M598.4,130.00 h24 " stroke="#cfcfcf" stroke-width="0.7" fill="none"/><rect x="604" y="116.6" width="12.6" height="5" fill="#e9bf73"/><rect x="610.6" y="126.4" width="13.2" height="10.2" fill="#fff" stroke="#666" stroke-width="0.9"/><path d="M616.4,128.4 L612.4,130.5 L616.4,132.6 M612.4,134.4 H616.4 M618.4,130.6 L622.4,132.8 L618.4,135" fill="none" stroke="#444" stroke-width="0.9"/><rect x="598.4" y="147" width="24" height="20" fill="#fff" stroke="#9a9a9a" stroke-width="0.8"/><path d="M606.40,147 v20 M614.40,147 v20 M598.4,152.00 h24 M598.4,157.00 h24 M598.4,162.00 h24 " stroke="#cfcfcf" stroke-width="0.7" fill="none"/><rect x="605" y="148" width="10.8" height="12.8" fill="#e9bf73"/><path d="M610.4,158.6 V150.4 M607.6,153.2 L610.4,150.2 L613.2,153.2" fill="none" stroke="#555" stroke-width="1.3"/><rect x="610.9" y="161.3" width="12.9" height="9.9" fill="#fff" stroke="#666" stroke-width="0.9"/><text x="612.2" y="169.9" font-size="9.4" fill="#444" font-family="Liberation Serif, serif" textLength="10.4" lengthAdjust="spacingAndGlyphs">10</text><rect x="598.2" y="184.4" width="24.2" height="22.8" fill="#fff" stroke="#9a9a9a" stroke-width="0.8"/><path d="M598.2,188.96 h24.2 M598.2,193.52 h24.2 M598.2,198.08 h24.2 M598.2,202.64 h24.2 M604.6,184.4 v22.8 M616.4000000000001,184.4 v22.8" stroke="#cfcfcf" stroke-width="0.7" fill="none"/><rect x="604.8" y="184.90" width="8.4" height="3.7" fill="#3a78c0"/><path d="M614.1999999999999,186.80 h2" stroke="#888" stroke-width="0.6"/><rect x="604.8" y="189.46" width="3" height="3.7" fill="#3a78c0"/><path d="M608.8,191.36 h2" stroke="#888" stroke-width="0.6"/><rect x="604.8" y="194.02" width="6.8" height="3.7" fill="#3a78c0"/><path d="M612.5999999999999,195.92 h2" stroke="#888" stroke-width="0.6"/><rect x="604.8" y="198.58" width="8.4" height="3.7" fill="#3a78c0"/><path d="M614.1999999999999,200.48 h2" stroke="#888" stroke-width="0.6"/><rect x="604.8" y="203.14" width="5.4" height="3.7" fill="#3a78c0"/><path d="M611.1999999999999,205.04 h2" stroke="#888" stroke-width="0.6"/><rect x="598.2" y="219" width="24.2" height="23" fill="#fff" stroke="#9a9a9a" stroke-width="0.8"/><path d="M598.2,223.60 h24.2 M598.2,228.20 h24.2 M598.2,232.80 h24.2 M598.2,237.40 h24.2 M604.6,219 v23 M616.4000000000001,219 v23" stroke="#cfcfcf" stroke-width="0.7" fill="none"/><rect x="604.8" y="219.40" width="11.6" height="3.9" fill="#4a86c5"/><path d="M610.5,221.40 h4" stroke="#555" stroke-width="0.5" opacity="0.6"/><rect x="604.8" y="224.00" width="11.6" height="3.9" fill="#6aa68a"/><path d="M610.5,226.00 h4" stroke="#555" stroke-width="0.5" opacity="0.6"/><rect x="604.8" y="228.60" width="11.6" height="3.9" fill="#f2cd82"/><path d="M610.5,230.60 h4" stroke="#555" stroke-width="0.5" opacity="0.6"/><rect x="604.8" y="233.20" width="11.6" height="3.9" fill="#f08a2c"/><path d="M610.5,235.20 h4" stroke="#555" stroke-width="0.5" opacity="0.6"/><rect x="604.8" y="237.80" width="11.6" height="3.9" fill="#d9532c"/><path d="M610.5,239.80 h4" stroke="#555" stroke-width="0.5" opacity="0.6"/><rect x="598.2" y="253.6" width="24.2" height="23.4" fill="#fff" stroke="#9a9a9a" stroke-width="0.8"/><path d="M598.2,258.28 h24.2 M598.2,262.96 h24.2 M598.2,267.64 h24.2 M598.2,272.32 h24.2 M604.6,253.6 v23.4 M616.4000000000001,253.6 v23.4" stroke="#cfcfcf" stroke-width="0.7" fill="none"/><circle cx="606.4" cy="256.00" r="0.9" fill="#3aa05a"/><path d="M610,256.10 h4.6" stroke="#666" stroke-width="0.7"/><circle cx="606.4" cy="260.68" r="0.9" fill="#f08a2c"/><path d="M610,260.78 h4.6" stroke="#666" stroke-width="0.7"/><circle cx="606.4" cy="265.36" r="0.9" fill="#3aa05a"/><path d="M610,265.46 h4.6" stroke="#666" stroke-width="0.7"/><circle cx="606.4" cy="270.04" r="0.9" fill="#f08a2c"/><path d="M610,270.14 h4.6" stroke="#666" stroke-width="0.7"/><circle cx="606.4" cy="274.72" r="0.9" fill="#3aa05a"/><path d="M610,274.82 h4.6" stroke="#666" stroke-width="0.7"/><rect x="597.4" y="287.6" width="10.8" height="11" fill="#fff" stroke="#8a8a8a" stroke-width="0.8" stroke-dasharray="1.6 0.8"/><path d="M597.4,290.8 h10.8 M597.4,295.20000000000005 h10.8 M599.8,287.6 v11 M605.9999999999999,287.6 v11" stroke="#cfcfcf" stroke-width="0.6" fill="none"/><rect x="600.4" y="291.20000000000005" width="5.000000000000001" height="3.4" fill="#e9bf73"/><rect x="597.4" y="307.6" width="10.4" height="10.8" fill="#fff" stroke="#8a8a8a" stroke-width="0.8" stroke-dasharray="1.6 0.8"/><path d="M597.4,310.8 h10.4 M597.4,315.20000000000005 h10.4 M599.8,307.6 v10.8 M605.5999999999999,307.6 v10.8" stroke="#cfcfcf" stroke-width="0.6" fill="none"/><rect x="600.4" y="311.20000000000005" width="4.6000000000000005" height="3.4" fill="#e9bf73"/><path d="M604.6,317.6 L608.4,313.6 L610.6,315.6 L606.8,319.8 Z" fill="#e8688a"/><rect x="596.6" y="326.6" width="11" height="10.6" fill="none" stroke="#8a8a8a" stroke-width="0.8"/><rect x="598.2" y="328" width="11" height="10.4" fill="#fff" stroke="#8a8a8a" stroke-width="0.8" stroke-dasharray="1.6 0.8"/><path d="M598.2,331.2 h11 M598.2,335.6 h11 M600.6,328 v10.4 M607.0,328 v10.4" stroke="#cfcfcf" stroke-width="0.6" fill="none"/><rect x="601.2" y="331.6" width="5.2" height="3.4" fill="#e9bf73"/><rect x="598.2" y="328" width="11" height="10.4" fill="none" stroke="#8a8a8a" stroke-width="0.8"/></svg>
<div style="left:43.4px;top:15.5px;width:56.9px;height:40.4px;box-sizing:border-box;border:3px solid #f00;border-radius:2px"></div>
<div style="left:586.3px;top:46.7px;width:71.3px;height:62.2px;box-sizing:border-box;border:3.2px solid #f00;border-radius:2.5px"></div>
<svg style="left:0;top:0" width="800" height="451"><path d="M541,333.3 L578,304.3" stroke="#f00" stroke-width="2.8" stroke-linecap="round" fill="none"/><path d="M591.8,293.2 L572.2,297.2 L583.2,312.2 Z" fill="#f00" stroke="#f00" stroke-width="0.6" stroke-linejoin="round"/></svg>
<div style="left:0px;top:1.1px;width:800px;height:1.7px;background:#000;"></div>
<div style="left:0px;top:448.9px;width:800px;height:2.1px;background:#000;"></div>
<div style="left:0.95px;top:1.1px;width:1.45px;height:450px;background:#000;"></div>
<div style="left:797.4px;top:1.1px;width:1.8px;height:450px;background:#000;"></div>
<div style="left:799.2px;top:1.1px;width:0.8px;height:450px;background:#333;"></div>
<div style="left:0px;top:0px;width:800px;height:1.1px;background:#fff;"></div>
<div style="left:0px;top:0px;width:0.95px;height:449px;background:#e8e8e8;"></div>
</div></body></html>
